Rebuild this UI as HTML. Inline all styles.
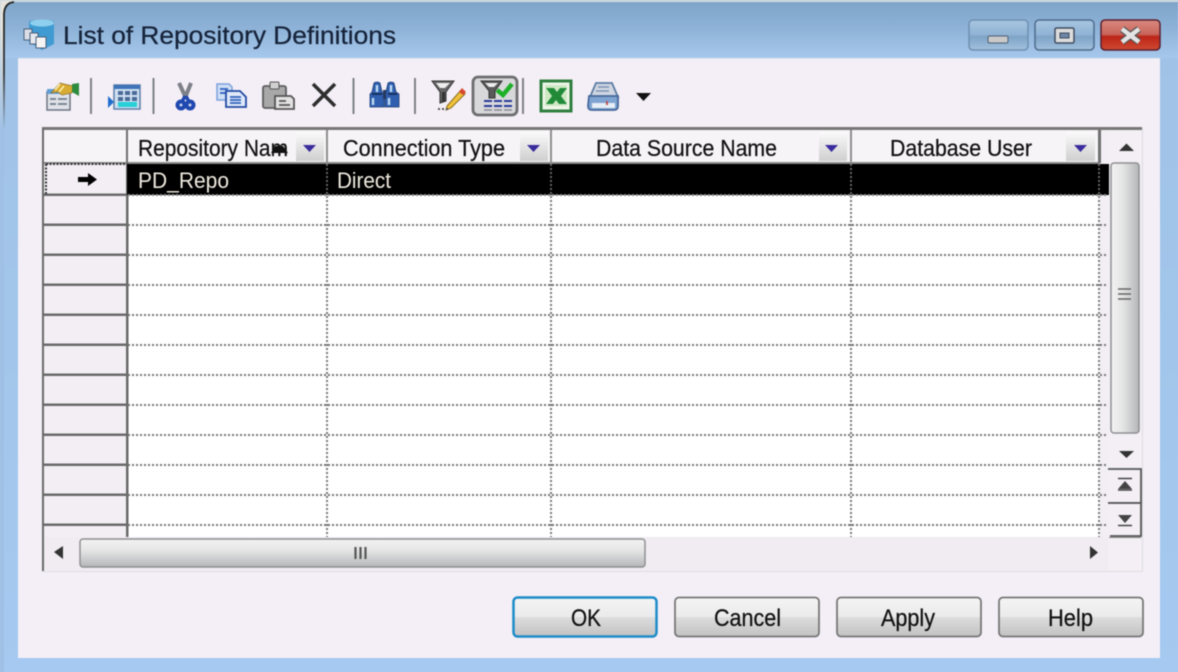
<!DOCTYPE html>
<html><head><meta charset="utf-8"><style>
html,body{margin:0;padding:0;width:1178px;height:672px;overflow:hidden;background:#a5c8ee}
svg{display:block;filter:blur(.6px)}
text{font-family:"Liberation Sans",sans-serif;fill:#111;stroke:#111;stroke-width:.25px}
</style></head><body>
<svg width="1178" height="672" viewBox="0 0 1178 672" xmlns="http://www.w3.org/2000/svg">
<defs>
<linearGradient id="tb" x1="0" y1="0" x2="0" y2="1"><stop offset="0" stop-color="#7da4c8"/><stop offset=".5" stop-color="#8fb3d8"/><stop offset="1" stop-color="#a6c8ec"/></linearGradient>
<linearGradient id="side" x1="0" y1="0" x2="0" y2="1"><stop offset="0" stop-color="#a0c2e6"/><stop offset="1" stop-color="#a5c9f0"/></linearGradient>
<linearGradient id="edge" x1="0" y1="0" x2="0" y2="1"><stop offset="0" stop-color="#222"/><stop offset=".55" stop-color="#333"/><stop offset="1" stop-color="#333" stop-opacity="0"/></linearGradient>
<linearGradient id="edgeL" x1="0" y1="0" x2="0" y2="1"><stop offset="0" stop-color="#e4e4dc"/><stop offset=".2" stop-color="#e4e4dc"/><stop offset="1" stop-color="#e4e4dc" stop-opacity="0"/></linearGradient>
<linearGradient id="btn" x1="0" y1="0" x2="0" y2="1"><stop offset="0" stop-color="#f4f4f4"/><stop offset=".48" stop-color="#ebebeb"/><stop offset=".52" stop-color="#dcdcdc"/><stop offset="1" stop-color="#c2c2c2"/></linearGradient>
<linearGradient id="cap" x1="0" y1="0" x2="0" y2="1"><stop offset="0" stop-color="#a8c6e2"/><stop offset=".5" stop-color="#8fb2d4"/><stop offset=".55" stop-color="#7ea3c6"/><stop offset="1" stop-color="#a2c2df"/></linearGradient>
<linearGradient id="red" x1="0" y1="0" x2="0" y2="1"><stop offset="0" stop-color="#d98a80"/><stop offset=".48" stop-color="#c9645a"/><stop offset=".55" stop-color="#bd2418"/><stop offset="1" stop-color="#cf4a30"/></linearGradient>
<linearGradient id="hs" x1="0" y1="0" x2="0" y2="1"><stop offset="0" stop-color="#f2f2f2"/><stop offset=".4" stop-color="#e6e6e6"/><stop offset="1" stop-color="#b4b6b8"/></linearGradient>
<linearGradient id="vs" x1="0" y1="0" x2="1" y2="0"><stop offset="0" stop-color="#f2f2f2"/><stop offset=".4" stop-color="#e6e6e6"/><stop offset="1" stop-color="#b4b6b8"/></linearGradient>
<linearGradient id="hd" x1="0" y1="0" x2="0" y2="1"><stop offset="0" stop-color="#fafafa"/><stop offset="1" stop-color="#cfcfcf"/></linearGradient>
</defs>

<!-- window frame -->
<rect width="1178" height="672" fill="url(#side)"/>
<rect x="0" y="0" width="1178" height="58" fill="url(#tb)"/>
<rect x="0" y="0" width="1178" height="2" fill="#d2dcdc"/>
<rect x="0" y="0" width="4" height="672" fill="#9fc0e4"/>
<path d="M0 0H14Q4 3 3.500 14V130H0Z" fill="url(#edgeL)"/>
<path d="M4 130V14Q4.500 3 14 2" fill="none" stroke="url(#edge)" stroke-width="1.800"/>
<rect x="18" y="58" width="1142" height="600" fill="#f4eff6"/>
<rect x="18" y="58" width="1142" height="1" fill="#dfe6f0"/>

<!-- title icon -->
<path d="M29 22Q29 20 42 20T54 22V44L42 50 29 42Z" fill="#3f9bd2"/>
<ellipse cx="42" cy="23" rx="12" ry="3.500" fill="#8ed0ee"/>
<rect x="24" y="29" width="8" height="11" fill="#d9dde6" stroke="#4b607c"/>
<rect x="30" y="33" width="8" height="11" fill="#e6e8ee" stroke="#4b607c"/>
<rect x="36" y="37" width="10" height="11" fill="#f4f4f4" stroke="#4b607c"/>
<text x="63" y="44" font-size="25" textLength="333" lengthAdjust="spacingAndGlyphs" style="fill:#16233a;stroke:#16233a">List of Repository Definitions</text>

<!-- caption buttons -->
<rect x="969" y="20" width="59" height="30" rx="4" fill="url(#cap)" stroke="#6f90b0" stroke-width="1.500"/>
<rect x="988" y="36" width="20" height="7" rx="1.500" fill="#c9c9c9" stroke="#4e6075"/>
<rect x="1035" y="20" width="59" height="30" rx="4" fill="url(#cap)" stroke="#4e6c8c" stroke-width="1.500"/>
<rect x="1055" y="28" width="19" height="15" rx="1.500" fill="#dcdcdc" stroke="#3e4c60" stroke-width="1.500"/>
<rect x="1060" y="33" width="9" height="5" fill="#6d86a6" stroke="#3e4c60"/>
<rect x="1101" y="20" width="59" height="30" rx="4" fill="url(#red)" stroke="#5a2030" stroke-width="1.500"/>
<path d="M1122 29L1139 42M1139 29L1122 42" stroke="#555" stroke-width="7"/>
<path d="M1122 29L1139 42M1139 29L1122 42" stroke="#e4e4e4" stroke-width="4.500"/>

<!-- toolbar -->
<rect x="90" y="78" width="2" height="36" fill="#7d8088"/>
<rect x="152.500" y="78" width="2" height="36" fill="#7d8088"/>
<rect x="352.500" y="78" width="2" height="36" fill="#7d8088"/>
<rect x="414" y="78" width="2" height="36" fill="#7d8088"/>
<rect x="522" y="78" width="2" height="36" fill="#7d8088"/>

<!-- properties icon -->
<rect x="47" y="92" width="23" height="18" fill="#dfe2e8" stroke="#6d7480" stroke-width="1.500"/>
<rect x="47" y="89" width="15" height="5" fill="#5f9fd8"/>
<path d="M50 99h6M58 99h9M50 104h6M58 104h9" stroke="#7a8694" stroke-width="2"/>
<path d="M51 93L60 83 73 86 72 93 62 95 58 92Z" fill="#d8ab32" stroke="#8b7030" stroke-width=".7"/>
<path d="M55 90L60 84M59 92L64 86" stroke="#fff2b0" stroke-width="1.500"/>
<path d="M72 84L79 83V96L72 92Z" fill="#2e8a3c"/>

<!-- list icon -->
<rect x="114" y="85" width="26" height="24" fill="#cfe0f2" stroke="#5c7fa8" stroke-width="1.500"/>
<rect x="114" y="85" width="26" height="4" fill="#3f74b8"/>
<path d="M118 91h5v4h-5zM125 91h5v4h-5zM132 91h5v4h-5zM118 97h5v4h-5zM125 97h5v4h-5zM132 97h5v4h-5z" fill="#4a6a98"/>
<rect x="118" y="102" width="19" height="5" fill="#27cfd6"/>
<path d="M108 96L114 102 108 108Z" fill="#1f6fd0"/>

<!-- scissors -->
<path d="M179 83L186 98M191 83L185 98" stroke="#7d8088" stroke-width="4" fill="none"/>
<circle cx="181" cy="105" r="3.500" fill="#cbd6ee" stroke="#1f48b0" stroke-width="4"/>
<circle cx="190" cy="105" r="3.500" fill="#cbd6ee" stroke="#1f48b0" stroke-width="4"/>
<path d="M185 96L182 102M186 96L189 102" stroke="#1f48b0" stroke-width="3.500"/>

<!-- copy -->
<path d="M217 84H229L232 87V100H217Z" fill="#cfdff5" stroke="#7ca0dc" stroke-width="1.500"/>
<path d="M220 89h8M220 93h8" stroke="#3d6cc4" stroke-width="2"/>
<path d="M226 91H240L246 97V107H226Z" fill="#dfe9f8" stroke="#224aa4" stroke-width="1.800"/>
<path d="M230 97h11M230 100h11M230 103h11" stroke="#2f60bc" stroke-width="1.800"/>

<!-- paste -->
<rect x="263" y="86" width="23" height="22" rx="2" fill="#a8a8a8" stroke="#5c5c5c" stroke-width="1.800"/>
<rect x="270" y="82" width="9" height="7" rx="1" fill="#d0d0d0" stroke="#555"/>
<path d="M275 96H291L294 99V109H275Z" fill="#e2e2e2" stroke="#555" stroke-width="1.800"/>
<path d="M279 101h7M279 105h11" stroke="#555" stroke-width="1.800"/>

<!-- delete X -->
<path d="M313 84L335 106M335 84L313 106" stroke="#2e2e2e" stroke-width="3.500"/>

<!-- binoculars -->
<path d="M374 83Q377 81 380 83L382 92 384 94V107H370V94L372 92Z" fill="#2f5fae" stroke="#1c3c78" stroke-width=".8"/>
<path d="M388 83Q391 81 394 83L396 92 399 94V107H385V94L386 92Z" fill="#2f5fae" stroke="#1c3c78" stroke-width=".8"/>
<rect x="383" y="90" width="3" height="9" fill="#27395e"/>
<path d="M377 85v7M391 85v7M373 98v7M389 98v7" stroke="#bcd8f4" stroke-width="2.500"/>
<path d="M372 94h10M388 94h9" stroke="#14264c" stroke-width="1.500"/>

<!-- filter edit -->
<path d="M432 81H454L446 92V101L440 103V92Z" fill="#666" stroke="#333"/>
<path d="M436 83H450L445 88H440Z" fill="#eee"/>
<path d="M442 92h3v10h-3z" fill="#333"/>
<path d="M447 106L461 90 465 94 451 108 446 110Z" fill="#efc13a" stroke="#8c6d20" stroke-width="1"/>
<path d="M459 92L462 88 466 92 463 95Z" fill="#d84830"/>
<path d="M438 109h2M442 109h2M446 109h2" stroke="#555" stroke-width="2"/>

<!-- filter active (pressed) -->
<rect x="473" y="77" width="44" height="38" rx="5" fill="#d8d8da" stroke="#6e6e70" stroke-width="2.800"/>
<path d="M481 81H502L495 91V98H489V91Z" fill="#5a5a5a" stroke="#333"/>
<path d="M485 83H498L494 87H489Z" fill="#eee"/>
<path d="M497 90L503 95 512 84" fill="none" stroke="#1fb02a" stroke-width="4.500"/>
<path d="M484 101h8M494 101h8M504 101h8M484 106h8M494 106h8M504 106h8" stroke="#2a3a9a" stroke-width="2"/>
<path d="M484 110h8M494 110h8M504 110h8" stroke="#8a8a96" stroke-width="1.500"/>

<!-- excel -->
<rect x="541" y="81" width="30" height="30" fill="#eef5e8" stroke="#2f7f3f" stroke-width="3"/>
<rect x="545" y="85" width="22" height="21" fill="#cfe8c4"/>
<path d="M546 88H554L557 92 560 88H567L561 96 567 104H559L556 100 553 104H546L552 96Z" fill="#208a38"/>

<!-- printer -->
<path d="M596 83H612L618 97H590Z" fill="#cfd6e2" stroke="#5e7ca4" stroke-width="1.800"/>
<path d="M598 87h11M596 91h13" stroke="#7f94b4" stroke-width="1.500"/>
<path d="M589 96H618V106Q618 110 614 110H592Q588 110 588 106Z" fill="#7fa4d2" stroke="#46689a" stroke-width="1.800"/>
<rect x="592" y="103" width="23" height="5" fill="#e8eef6"/>
<rect x="606" y="101" width="2" height="4" fill="#b55"/>
<path d="M636 93H651L643.500 101Z" fill="#111"/>

<!-- grid outer -->
<rect x="42" y="128" width="1100" height="444" fill="#f2eef4"/>
<rect x="42" y="127" width="1100" height="3" fill="#777"/>
<rect x="42" y="128" width="2" height="443" fill="#6a6a6a"/>
<rect x="127" y="163" width="973" height="374" fill="#fff"/>

<!-- column headers -->
<rect x="44" y="130" width="1056" height="33" fill="#f7f4f8"/>
<rect x="44" y="162" width="1056" height="2" fill="#8a8a8a"/>
<rect x="126" y="130" width="2" height="33" fill="#6f6f6f"/>
<rect x="326" y="130" width="2" height="33" fill="#8f8f8f"/>
<rect x="550" y="130" width="2" height="33" fill="#8f8f8f"/>
<rect x="850" y="130" width="2" height="33" fill="#8f8f8f"/>
<rect x="1098" y="130" width="3" height="33" fill="#6f6f6f"/>

<g fill="url(#hd)">
<rect x="296" y="132" width="28" height="29"/><rect x="520" y="132" width="28" height="29"/><rect x="819" y="132" width="28" height="29"/><rect x="1066" y="132" width="29" height="29"/>
</g>
<g fill="#3a2c9c">
<path d="M303 145H316L309.500 152Z"/><path d="M527 145H540L533.500 152Z"/><path d="M825 145H838L831.500 152Z"/><path d="M1074 145H1087L1080.500 152Z"/>
</g>

<text x="138" y="156" font-size="23" textLength="150" lengthAdjust="spacingAndGlyphs">Repository Nam</text>
<path d="M271 153L275 146H283L288 153Z" fill="#111"/>
<text x="343" y="156" font-size="23" textLength="162" lengthAdjust="spacingAndGlyphs">Connection Type</text>
<text x="596" y="156" font-size="23" textLength="181" lengthAdjust="spacingAndGlyphs">Data Source Name</text>
<text x="890" y="156" font-size="23" textLength="142" lengthAdjust="spacingAndGlyphs">Database User</text>

<!-- row headers -->
<g fill="#6a6a6a">
<rect x="44" y="223.500" width="84" height="2.500"/><rect x="44" y="253.500" width="84" height="2.500"/><rect x="44" y="283.500" width="84" height="2.500"/><rect x="44" y="313.500" width="84" height="2.500"/><rect x="44" y="343.500" width="84" height="2.500"/><rect x="44" y="373.500" width="84" height="2.500"/><rect x="44" y="403.500" width="84" height="2.500"/><rect x="44" y="433.500" width="84" height="2.500"/><rect x="44" y="463.500" width="84" height="2.500"/><rect x="44" y="493.500" width="84" height="2.500"/><rect x="44" y="523.500" width="84" height="2.500"/>
<rect x="44" y="193.500" width="84" height="2.500"/>
<rect x="126" y="163" width="2.500" height="374"/>
</g>
<path d="M46 164H126M46 164V194" stroke="#333" stroke-width="2" stroke-dasharray="2 1.500" fill="none"/>
<path d="M78 177H88V173L97 179.500 88 186V182H78Z" fill="#000"/>

<!-- grid dotted lines -->
<g stroke="#777" stroke-width="2" stroke-dasharray="2 2" fill="none">
<path d="M128 225H1106M128 255H1106M128 285H1106M128 315H1106M128 345H1106M128 375H1106M128 405H1106M128 435H1106M128 465H1106M128 495H1106M128 525H1106"/>
<path d="M327 196V537M551 196V537M851 196V537M1099 196V537"/>
</g>

<!-- selected row -->
<rect x="127" y="164" width="982" height="31" fill="#000"/>
<path d="M128 195H1108" stroke="#888" stroke-width="2" stroke-dasharray="2 2"/>
<path d="M327 164V195M551 164V195M851 164V195M1099 164V195" stroke="#666" stroke-width="2" stroke-dasharray="2 2"/>
<text x="138" y="188" font-size="22" textLength="91" lengthAdjust="spacingAndGlyphs" style="fill:#f0ebe0;stroke:none">PD_Repo</text>
<text x="337" y="188" font-size="22" textLength="54" lengthAdjust="spacingAndGlyphs" style="fill:#f0ebe0;stroke:none">Direct</text>

<!-- vertical scrollbar -->
<rect x="1109" y="130" width="32" height="440" fill="#f3eff5"/>
<path d="M1119 151L1126.500 143.500 1134 151Z" fill="#333"/>
<rect x="1111" y="163" width="28" height="270" rx="3" fill="url(#vs)" stroke="#8f9092" stroke-width="1.500"/>
<path d="M1118 289h13M1118 294h13M1118 299h13" stroke="#666" stroke-width="1.500"/>
<path d="M1119 451H1134L1126.500 458Z" fill="#333"/>
<path d="M1108 469H1141V503H1108" fill="#f3eff5" stroke="#555" stroke-width="1.800"/>
<path d="M1108 503H1141V536H1110" fill="#f3eff5" stroke="#555" stroke-width="1.800"/>
<path d="M1109 538H1141" stroke="#888" stroke-width="2"/>
<path d="M1118 478.500H1132M1118 490H1132" stroke="#444" stroke-width="1.500"/>
<path d="M1118 489L1125 481 1132 489Z" fill="#444"/>
<path d="M1118 515L1125 523 1132 515Z" fill="#444"/>
<path d="M1118 525.500H1132" stroke="#444" stroke-width="1.500"/>

<!-- horizontal scrollbar -->
<rect x="44" y="537" width="1064" height="33" fill="#f0ecf2"/>
<rect x="1108" y="538" width="34" height="33" fill="#f3eff5"/>
<rect x="80" y="539" width="565" height="28" rx="3" fill="url(#hs)" stroke="#8f9092" stroke-width="1.500"/>
<path d="M355.500 547v12M360.500 547v12M365.500 547v12" stroke="#555" stroke-width="2.200"/>
<path d="M54 552L63 546V559Z" fill="#333"/>
<path d="M1090 546L1098 552.500 1090 559Z" fill="#333"/>
<rect x="42" y="571" width="1100" height="1" fill="#dcdce0"/>
<rect x="1142" y="128" width="1" height="444" fill="#dcdce0"/>

<!-- dialog buttons -->
<rect x="513.500" y="597.500" width="143" height="39" rx="4" fill="url(#btn)" stroke="#1c8cc8" stroke-width="2.500"/>
<rect x="675" y="597.500" width="144" height="39" rx="4" fill="url(#btn)" stroke="#777" stroke-width="1.800"/>
<rect x="837" y="597.500" width="144" height="39" rx="4" fill="url(#btn)" stroke="#777" stroke-width="1.800"/>
<rect x="999" y="597.500" width="144" height="39" rx="4" fill="url(#btn)" stroke="#777" stroke-width="1.800"/>
<text x="571" y="626" font-size="24" textLength="30" lengthAdjust="spacingAndGlyphs">OK</text>
<text x="714" y="626" font-size="24" textLength="67" lengthAdjust="spacingAndGlyphs">Cancel</text>
<text x="881" y="626" font-size="24" textLength="54" lengthAdjust="spacingAndGlyphs">Apply</text>
<text x="1048" y="626" font-size="24" textLength="45" lengthAdjust="spacingAndGlyphs">Help</text>
</svg>
</body></html>
